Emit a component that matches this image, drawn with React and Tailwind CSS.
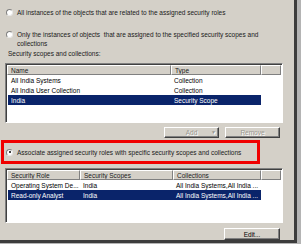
import React from 'react';

const Radio = ({ checked }) => (
  <span className="relative inline-block w-[7px] h-[7px] rounded-full bg-white border border-[#808080] border-r-[#e8e8e8] border-b-[#e8e8e8] shrink-0">
    {checked && <span className="absolute left-[1.5px] top-[1.5px] w-[2px] h-[2px] rounded-full bg-black" />}
  </span>
);

const Btn = ({ children, disabled, className = '' }) => (
  <div
    className={`relative flex items-center justify-center bg-[#d4d0c8] border border-white border-r-[#404040] border-b-[#404040] shadow-[inset_-1px_-1px_0_#808080] ${
      disabled ? 'text-[#9a9890] [text-shadow:1px_1px_0_#fff]' : 'text-black'
    } ${className}`}
  >
    {children}
  </div>
);

const Header = ({ cols }) => (
  <div className="flex h-[10px] shrink-0">
    {cols.map((c, i) => (
      <div
        key={i}
        style={{ width: c.w }}
        className="h-full flex items-center pl-[3px] bg-[#d4d0c8] border-t border-l border-white border-r border-b border-r-[#808080] border-b-[#808080] overflow-hidden whitespace-nowrap"
      >
        {c.label}
      </div>
    ))}
  </div>
);

const Row = ({ cells, widths, selected }) => (
  <div className="flex h-[10px]">
    <div className={`flex ml-[1px] ${selected ? 'bg-[#0a246a] text-white' : 'text-black'}`}>
      {cells.map((c, i) => (
        <div key={i} style={{ width: i === 0 ? widths[i] - 1 : widths[i] }} className="h-full flex items-center pl-[3px] whitespace-nowrap overflow-hidden">
          {c}
        </div>
      ))}
    </div>
  </div>
);

const ListView = ({ cols, rows, height }) => (
  <div className={`w-[278px] ${height} bg-white border border-[#808080] border-r-white border-b-white shadow-[inset_1px_1px_0_#404040] p-[1px] flex flex-col`}>
    <Header cols={cols} />
    {rows.map((r, i) => (
      <Row key={i} cells={r.cells} widths={cols.map(c => c.w)} selected={r.selected} />
    ))}
  </div>
);

export default function App() {
  const scopeCols = [
    { label: 'Name', w: 164 },
    { label: 'Type', w: 90 },
    { label: '', w: 20 },
  ];
  const scopeRows = [
    { cells: ['All India Systems', 'Collection'] },
    { cells: ['All India User Collection', 'Collection'] },
    { cells: ['India', 'Security Scope'], selected: true },
  ];
  const roleCols = [
    { label: 'Security Role', w: 73 },
    { label: 'Security Scopes', w: 93 },
    { label: 'Collections', w: 88 },
    { label: '', w: 20 },
  ];
  const roleRows = [
    { cells: ['Operating System De...', 'India', 'All India Systems,All India ...'] },
    { cells: ['Read-only Analyst', 'India', 'All India Systems,All India ...'], selected: true },
  ];

  return (
    <div className="w-[301px] h-[244px] bg-[#b4b4b4] font-['Liberation_Sans',Arial,sans-serif] text-[6.5px] leading-[9px] text-[#1a1a1a]">
      <div className="w-[297px] h-[243px] bg-[#d4d0c8] border-r-[3px] border-b-[3px] border-[#3c3c3c] flex flex-col pl-[5px] pt-[8px]">
        <div className="flex items-center h-[9px] pl-[1px]">
          <Radio />
          <span className="ml-[4px]">All instances of the objects that are related to the assigned security roles</span>
        </div>

        <div className="flex items-start mt-[13px] pl-[1px]">
          <span className="mt-[1px]"><Radio /></span>
          <span className="ml-[4px] w-[250px]">
            Only the instances of objects&nbsp; that are assigned to the specified security scopes and collections
          </span>
        </div>

        <div className="h-[9px] mt-[1px] pl-[3px]">Security scopes and collections:</div>

        <div className="mt-[5px]">
          <ListView cols={scopeCols} rows={scopeRows} height="h-[60px]" />
        </div>

        <div className="flex justify-end gap-[6px] w-[278px] pr-[3px] mt-[4px]">
          <Btn disabled className="w-[55px] h-[11px]">
            Add
            <span className="absolute right-[2px] text-[5px]">▼</span>
          </Btn>
          <Btn disabled className="w-[55px] h-[11px]">Remove</Btn>
        </div>

        <div className="mt-[2px] -ml-[4px] w-[259px] h-[24px] border-[3px] border-[#f00000] flex items-center pl-[2px]">
          <Radio checked />
          <span className="ml-[4px]">Associate assigned security roles with specific security scopes and collections</span>
        </div>

        <div className="mt-[4px]">
          <ListView cols={roleCols} rows={roleRows} height="h-[55px]" />
        </div>

        <div className="flex justify-end w-[278px] pr-[3px] mt-[5px]">
          <Btn className="w-[56px] h-[12px]">Edit...</Btn>
        </div>
      </div>
    </div>
  );
}
